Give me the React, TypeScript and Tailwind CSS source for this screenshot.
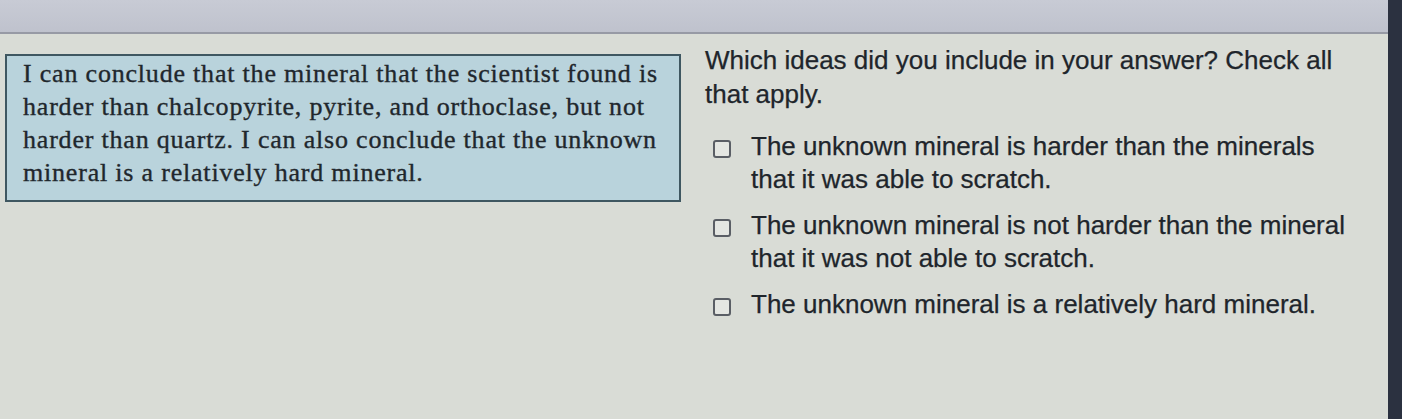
export default function App() {
  const options = [
    ["The unknown mineral is harder than the minerals", "that it was able to scratch."],
    ["The unknown mineral is not harder than the mineral", "that it was not able to scratch."],
    ["The unknown mineral is a relatively hard mineral."],
  ];

  return (
    <div className="w-[1402px] h-[419px] flex bg-[#d9dcd6] overflow-hidden">
      <div className="flex-1 flex flex-col">
        <div className="h-[34px] bg-gradient-to-b from-[#c8cbd5] to-[#bfc2cd] border-b-2 border-[#979aa5]" />
        <div className="flex pt-[20px]">
          <div className="ml-[5px] w-[676px] h-[148px] bg-[#b9d3dc] border-2 border-[#3f5761] pl-[16px] pt-[1px] font-['Liberation_Serif',serif] text-[26px] leading-[33px] tracking-[0.8px] text-[#1f272d] [-webkit-text-stroke:0.35px_#1f272d]">
            I can conclude that the mineral that the scientist found is
            <br />
            harder than chalcopyrite, pyrite, and orthoclase, but not
            <br />
            harder than quartz. I can also conclude that the unknown
            <br />
            mineral is a relatively hard mineral.
          </div>
          <div className="ml-[24px] flex flex-col font-['Liberation_Sans',sans-serif] text-[#20252b] text-[26px] [-webkit-text-stroke:0.25px_#20252b]">
            <p className="leading-[34px] mt-[-11px]">
              Which ideas did you include in your answer? Check all
              <br />
              that apply.
            </p>
            <div className="mt-[19px] flex flex-col gap-[13px]">
              {options.map((lines, i) => (
                <div key={i} className="flex items-start ml-[8px]">
                  <div className="mt-[10px] w-[18px] h-[18px] rounded-[3px] border-2 border-[#5a5e65] bg-[#e4e6e2] shrink-0" />
                  <div className="ml-[20px] leading-[33px]">
                    {lines.map((l, j) => (
                      <div key={j}>{l}</div>
                    ))}
                  </div>
                </div>
              ))}
            </div>
          </div>
        </div>
      </div>
      <div className="w-[14px] bg-[#2b3140]" />
    </div>
  );
}
